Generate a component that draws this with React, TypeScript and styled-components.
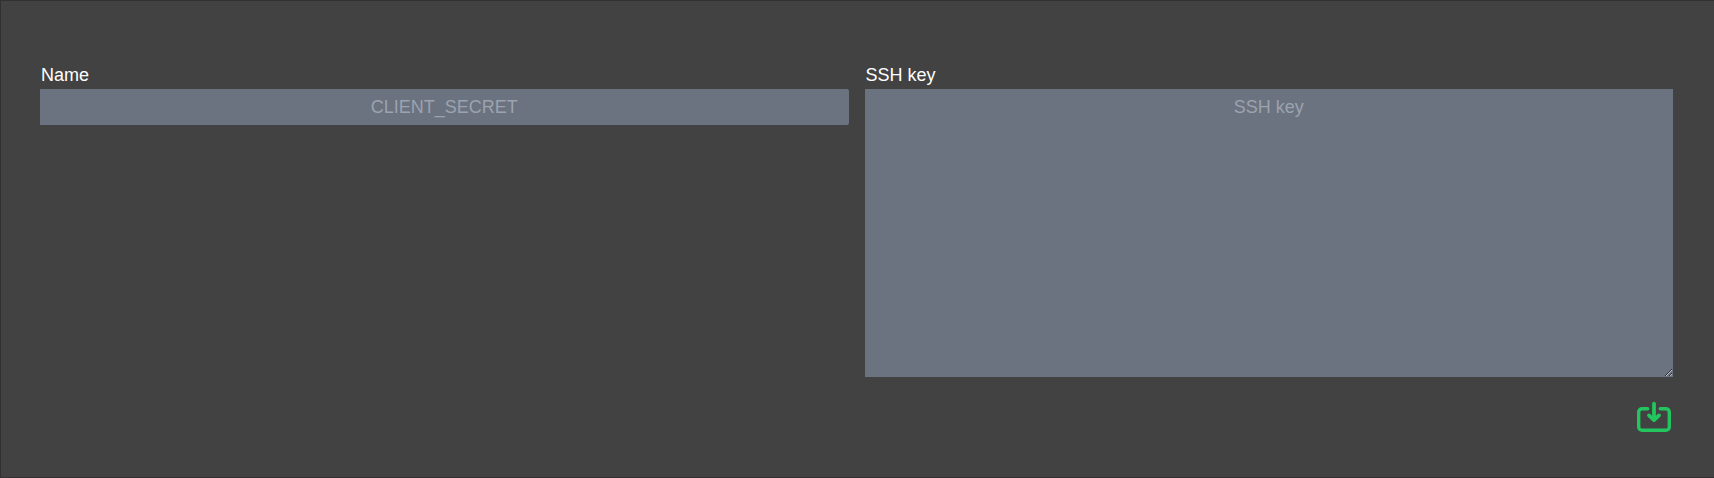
import React from 'react';
import styled, { createGlobalStyle } from 'styled-components';

const GlobalStyle = createGlobalStyle`
  *, *::before, *::after { box-sizing: border-box; }
  body {
    margin: 0;
    background: #424242;
    font-family: "Liberation Sans", Arial, sans-serif;
    font-size: 18px;
    line-height: 27px;
  }
`;

const Panel = styled.form`
  height: 478px;
  padding: 61px 41px 0 39px;
  background: #424242;
  border: 1px solid #333031;
  border-right: 0;
  overflow: hidden;
`;

const Fields = styled.div`
  display: grid;
  grid-template-columns: 808.5px 808.5px;
  column-gap: 16px;
  align-items: start;
`;

const Field = styled.label`
  display: flex;
  flex-direction: column;
`;

const Caption = styled.span`
  padding-left: 1px;
  color: #fff;
`;

const Input = styled.input`
  display: block;
  width: 100%;
  height: 36px;
  margin: 0;
  padding: 0 9px;
  border: 0;
  border-radius: 0 2px 2px 0;
  outline: none;
  background: #6b7280;
  color: #fff;
  font: inherit;
  text-align: center;
  &::placeholder { color: #9ca3af; opacity: 1; }
`;

const KeyArea = styled(Input).attrs({ as: 'textarea' })`
  height: 288px;
  padding: 4.5px 9px;
  border-radius: 0;
  resize: both;
`;

const Actions = styled.div`
  display: flex;
  justify-content: flex-end;
  width: 1633px;
  padding: 23px 0 0;
`;

const SaveButton = styled.button`
  display: flex;
  padding: 0;
  border: 0;
  background: none;
  color: #22c55e;
`;

const SaveIcon = () => (
  <svg width="38" height="34" viewBox="0 0 38 34" fill="none" stroke="currentColor" strokeWidth="3.4" strokeLinecap="round" strokeLinejoin="round">
    <path d="M12.7 8.7H7A3.3 3.3 0 0 0 3.7 12v15A3.3 3.3 0 0 0 7 30.3h24a3.3 3.3 0 0 0 3.3-3.3V12A3.3 3.3 0 0 0 31 8.7h-5.7" />
    <path d="M19 3.7V19.5M14 15.4l5 4.7 5-4.7" strokeWidth="3.8" />
  </svg>
);

export default function App() {
  return (
    <>
      <GlobalStyle />
      <Panel>
        <Fields>
          <Field>
            <Caption>Name</Caption>
            <Input placeholder="CLIENT_SECRET" />
          </Field>
          <Field>
            <Caption>SSH key</Caption>
            <KeyArea placeholder="SSH key" />
          </Field>
        </Fields>
        <Actions>
          <SaveButton type="button" aria-label="Save">
            <SaveIcon />
          </SaveButton>
        </Actions>
      </Panel>
    </>
  );
}
